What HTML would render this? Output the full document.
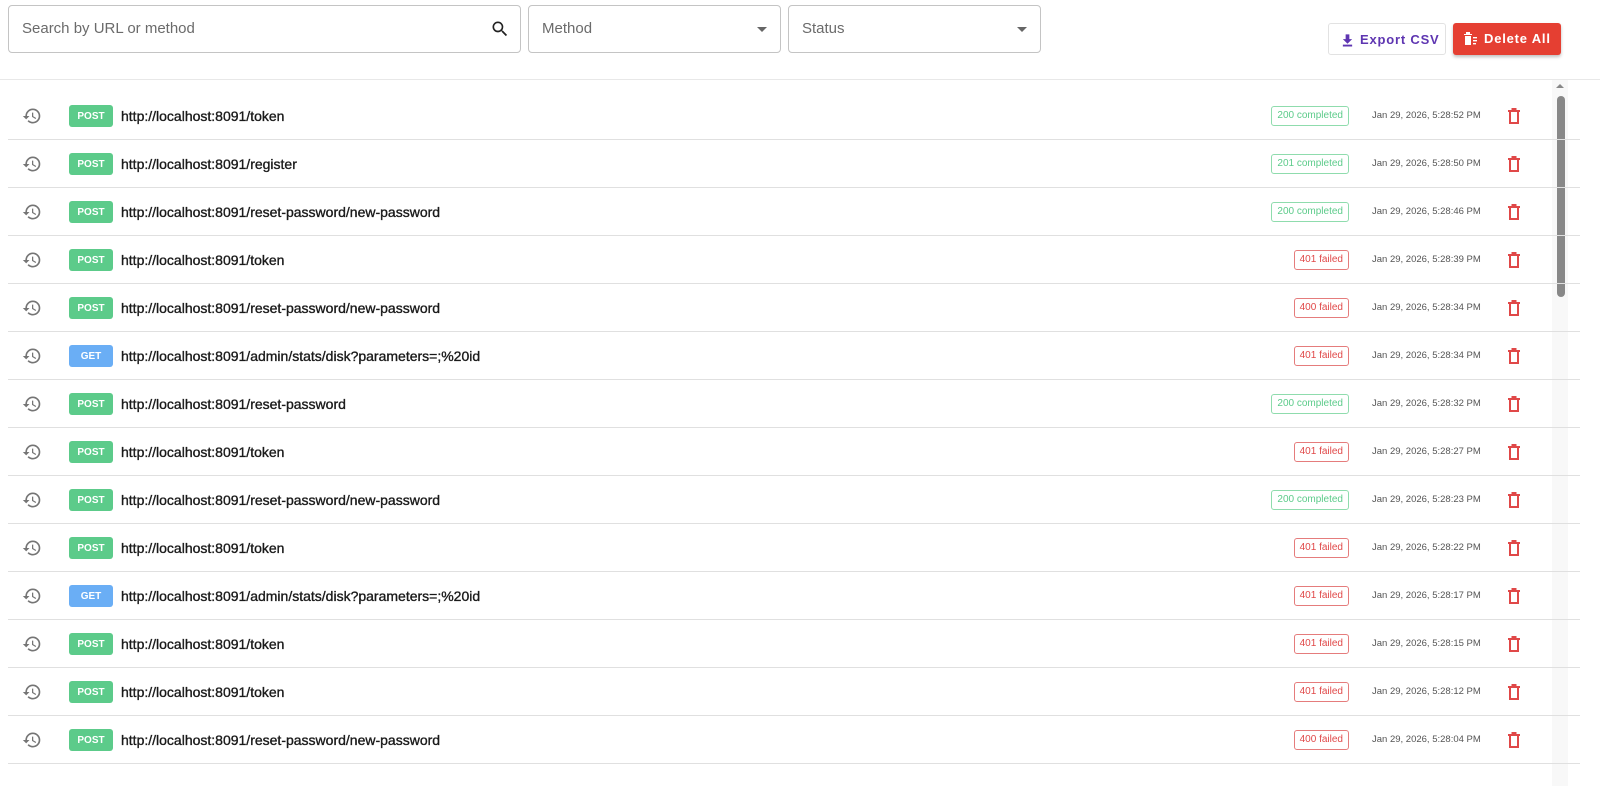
<!DOCTYPE html>
<html><head><meta charset="utf-8"><style>
*{box-sizing:border-box;margin:0;padding:0}
body{width:1600px;height:786px;overflow:hidden;background:#fff;font-family:"Liberation Sans",sans-serif;position:relative}
.box{position:absolute;top:5px;height:48px;border:1px solid #c4c4c4;border-radius:4px;color:#6b6b6b;font-size:15px;line-height:46px;padding-left:13px}
.btn{position:absolute;top:23px;height:32px;border-radius:3px;font-size:13px;font-weight:bold;letter-spacing:.8px;line-height:32px}
.hl{position:absolute;left:0;right:0;top:79px;height:1px;background:#e8e8e8}
.row{position:absolute;left:8px;width:1572px;height:48px;border-bottom:1px solid #e0e0e0}
.hist{position:absolute;left:14px;top:14px}
.m{position:absolute;left:61px;top:13px;width:44px;height:22px;border-radius:3px;color:#fff;font-size:10px;font-weight:bold;text-align:center;line-height:23px}
.post{background:#5ccb8a}.get{background:#6aaef5}
.url{position:absolute;left:113px;top:0;line-height:48px;font-size:14px;color:#1a1a1a;-webkit-text-stroke:0.35px #1a1a1a}
.chip{position:absolute;right:231px;top:14px;height:20px;border:1px solid;border-radius:3px;font-size:10px;line-height:18px;padding:0 5px}
.ok{color:#5ccb8a;border-color:#8fdcad}.bad{color:#e04848;border-color:#e57c7c}
.dt{position:absolute;left:1364px;top:0;line-height:48px;font-size:9.5px;color:#555}
.tr{position:absolute;left:1499px;top:15px}
.sb{position:absolute;left:1552px;top:80px;width:16px;height:706px;background:#f8f8f8}
.th{position:absolute;left:1557px;top:96px;width:8px;height:201px;background:#888;border-radius:4px}
</style></head><body>
<div class="box" style="left:8px;width:513px">Search by URL or method
<svg style="position:absolute;right:10px;top:13px" width="20" height="20" viewBox="0 0 24 24"><path fill="#222" d="M15.5 14h-.79l-.28-.27A6.470 6.470 0 0 0 16 9.5 6.5 6.5 0 1 0 9.5 16c1.61 0 3.09-.59 4.230-1.57l.27.28v.79l5 4.99L20.49 19l-4.99-5zm-6 0C7.01 14 5 11.99 5 9.5S7.01 5 9.5 5 14 7.01 14 9.5 11.99 14 9.5 14z"/></svg></div>
<div class="box" style="left:528px;width:253px">Method<span style="position:absolute;right:13px;top:21px;border:5px solid transparent;border-top-color:#666;border-bottom:0"></span></div>
<div class="box" style="left:788px;width:253px">Status<span style="position:absolute;right:13px;top:21px;border:5px solid transparent;border-top-color:#666;border-bottom:0"></span></div>
<div class="btn" style="left:1328px;width:118px;border:1px solid #e2e2e2;color:#5e35b1;padding-left:12px">
<svg style="vertical-align:-3px;margin-right:6px" width="13" height="14" viewBox="0 0 14 14"><path fill="#5e35b1" d="M5 1h4v5h3L7 11 2 6h3zM2 12h10v2H2z"/></svg>Export CSV</div>
<div class="btn" style="left:1453px;width:108px;background:#e53f32;color:#fff;padding-left:10px;box-shadow:0 2px 3px rgba(0,0,0,.25)">
<svg style="vertical-align:-2px;margin-right:6px" width="15" height="13" viewBox="0 0 15 13"><path fill="#fff" d="M1 2h8v1H1zM3 0h4v2H3zM2 4h6v9H2zM10 5h4v1.4h-4zM10 8h4v1.4h-4zM10 11h3v1.4h-3z"/></svg>Delete All</div>
<div class="hl"></div>
<div class="sb"><div style="position:absolute;left:4px;top:4px;border:4px solid transparent;border-bottom-color:#888;border-top:0"></div></div><div class="th"></div>
<div id="rows"></div>
<script>
var d=[["POST","/token",200,"completed","52"],["POST","/register",201,"completed","50"],["POST","/reset-password/new-password",200,"completed","46"],["POST","/token",401,"failed","39"],["POST","/reset-password/new-password",400,"failed","34"],["GET","/admin/stats/disk?parameters=;%20id",401,"failed","34"],["POST","/reset-password",200,"completed","32"],["POST","/token",401,"failed","27"],["POST","/reset-password/new-password",200,"completed","23"],["POST","/token",401,"failed","22"],["GET","/admin/stats/disk?parameters=;%20id",401,"failed","17"],["POST","/token",401,"failed","15"],["POST","/token",401,"failed","12"],["POST","/reset-password/new-password",400,"failed","04"]];
var h="";
d.forEach(function(r,i){
var hist='<svg class="hist" width="20" height="20" viewBox="0 0 24 24"><path fill="#757575" d="M13 3a9 9 0 0 0-9 9H1l3.89 3.89.07.14L9 12H6c0-3.87 3.13-7 7-7s7 3.13 7 7-3.13 7-7 7c-1.93 0-3.68-.79-4.94-2.06l-1.42 1.42A8.954 8.954 0 0 0 13 21a9 9 0 0 0 0-18zm-1 5v5l4.28 2.54.72-1.21-3.5-2.08V8H12z"/></svg>';
var tr='<svg class="tr" width="14" height="18" viewBox="0 0 14 18"><path fill="none" stroke="#e04848" stroke-width="2" d="M3 5v11h8V5"/><path fill="#e04848" d="M1 3h12v2H1zM4.5 1h5v2h-5z"/></svg>';
h+='<div class="row" style="top:'+(92+i*48)+'px">'+hist+'<div class="m '+(r[0]=="GET"?"get":"post")+'">'+r[0]+'</div><div class="url">http://localhost:8091'+r[1]+'</div><div class="chip '+(r[3]=="completed"?"ok":"bad")+'">'+r[2]+' '+r[3]+'</div><div class="dt">Jan 29, 2026, 5:28:'+r[4]+' PM</div>'+tr+'</div>';
});
document.getElementById("rows").innerHTML=h;
</script>
</body></html>
